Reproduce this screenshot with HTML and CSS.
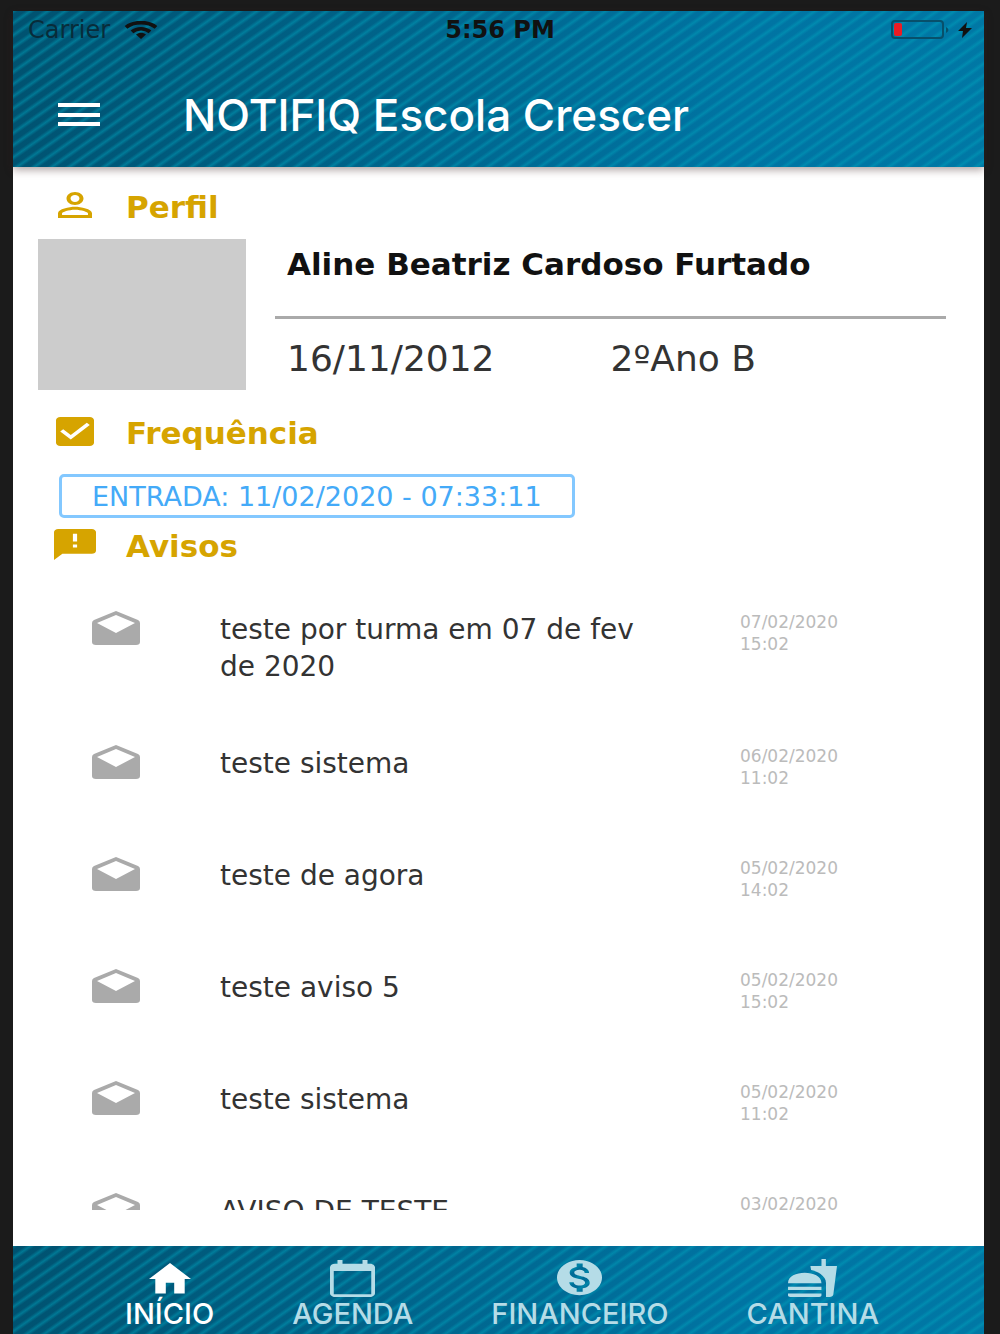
FILE: index.html
```html
<!DOCTYPE html>
<html lang="pt-BR">
<head>
    <meta charset="UTF-8">
    <meta name="viewport" content="width=device-width, initial-scale=1.0">
    <title>NOTIFIQ Escola Crescer</title>
    <link rel="stylesheet" href="styles.css">
</head>
<body>
    <div class="app">
        <!-- Header -->
        <header class="header striped">
            <div class="status-bar">
                <div class="carrier">
                    <span>Carrier</span>
                    <svg class="wifi" viewBox="0 0 34 20" preserveAspectRatio="none" fill="none" stroke="#111" stroke-width="4">
                        <path d="M2 7C10 0 24 0 32 7"/>
                        <path d="M8 12C13 7.500 21 7.500 26 12"/>
                        <path d="M12 15C15 12.500 19 12.500 22 15L17 20Z" fill="#111" stroke="none"/>
                    </svg>
                </div>
                <span class="clock">5:56 PM</span>
                <div class="power">
                    <svg class="battery" viewBox="0 0 60 22" fill="none">
                        <rect x="2" y="2" width="51" height="17" rx="3" stroke="#07506b" stroke-width="2"/>
                        <rect x="4" y="4" width="8" height="13" rx="2" fill="#ed1c24"/>
                        <path d="M56 8v6q5-3 0-6z" fill="#07506b"/>
                    </svg>
                    <svg class="bolt" viewBox="0 0 14 16"><path d="M9 0L0 9h5L4 16L14 6H8z" fill="#111"/></svg>
                </div>
            </div>
            <div class="toolbar">
                <button type="button" class="menu-button" aria-label="Menu">
                    <svg viewBox="0 0 44 24" fill="#fff"><path d="M1 0h42v4H1zM1 10h42v4H1zM1 19h42v4H1z"/></svg>
                </button>
                <h1>NOTIFIQ Escola Crescer</h1>
            </div>
        </header>

        <main class="content">
            <!-- Perfil -->
            <h2 class="section-title">
                <svg class="icon-person" viewBox="4 4 16 16" preserveAspectRatio="none" fill="#d6a400"><path d="M12 5.900c1.160 0 2.100.940 2.100 2.100s-.940 2.100-2.100 2.100S9.900 9.160 9.900 8s.940-2.100 2.100-2.100m0 9c2.970 0 6.100 1.460 6.100 2.100v1.100H5.900V17c0-.640 3.130-2.100 6.100-2.100M12 4C9.790 4 8 5.790 8 8s1.790 4 4 4 4-1.790 4-4-1.790-4-4-4zm0 9c-2.670 0-8 1.340-8 4v3h16v-3c0-2.660-5.330-4-8-4z"/></svg>
                Perfil
            </h2>
            <section class="profile">
                <div class="photo"></div>
                <div class="profile-info">
                    <h3>Aline Beatriz Cardoso Furtado</h3>
                    <div class="profile-row">
                        <span>16/11/2012</span>
                        <span>2ºAno B</span>
                    </div>
                </div>
            </section>

            <!-- Frequência -->
            <h2 class="section-title">
                <svg class="icon-check" viewBox="3 3 18 18" preserveAspectRatio="none" fill="#d6a400"><path d="M19 3H5c-1.110 0-2 .900-2 2v14c0 1.100.890 2 2 2h14c1.110 0 2-.900 2-2V5c0-1.100-.890-2-2-2zm-9 14l-5-5 1.410-1.410L10 14.170l7.590-7.590L19 8l-9 9z"/></svg>
                Frequência
            </h2>
            <button type="button" class="entry">ENTRADA: 11/02/2020 - 07:33:11</button>

            <!-- Avisos -->
            <h2 class="section-title">
                <svg class="icon-notice" viewBox="2 2 20 20" preserveAspectRatio="none" fill="#d6a400"><path d="M20 2H4c-1.100 0-1.990.900-1.990 2L2 22l4-4h14c1.100 0 2-.900 2-2V4c0-1.100-.900-2-2-2zm-7 12h-2v-2h2v2zm0-4h-2V5h2v5z"/></svg>
                Avisos
            </h2>
            <ul class="notices">
                <li>
                    <svg class="icon-mail" viewBox="0 0 48 34"><use href="#mail"/></svg>
                    <p>teste por turma em 07 de fev de 2020</p>
                    <time>07/02/2020 15:02</time>
                </li>
                <li>
                    <svg class="icon-mail" viewBox="0 0 48 34"><use href="#mail"/></svg>
                    <p>teste sistema</p>
                    <time>06/02/2020 11:02</time>
                </li>
                <li>
                    <svg class="icon-mail" viewBox="0 0 48 34"><use href="#mail"/></svg>
                    <p>teste de agora</p>
                    <time>05/02/2020 14:02</time>
                </li>
                <li>
                    <svg class="icon-mail" viewBox="0 0 48 34"><use href="#mail"/></svg>
                    <p>teste aviso 5</p>
                    <time>05/02/2020 15:02</time>
                </li>
                <li>
                    <svg class="icon-mail" viewBox="0 0 48 34"><use href="#mail"/></svg>
                    <p>teste sistema</p>
                    <time>05/02/2020 11:02</time>
                </li>
                <li>
                    <svg class="icon-mail" viewBox="0 0 48 34"><use href="#mail"/></svg>
                    <p>AVISO DE TESTE</p>
                    <time>03/02/2020</time>
                </li>
            </ul>
        </main>

        <!-- Tabs -->
        <nav class="tabs striped">
            <a href="#inicio" class="active">
                <svg class="icon-home" viewBox="2 3 20 19" preserveAspectRatio="none" fill="currentColor"><path d="M10 20v-6h4v6h5v-8h3L12 3 2 12h3v8z"/></svg>
                INÍCIO
            </a>
            <a href="#agenda">
                <svg class="icon-tab" viewBox="3 1 18 20" preserveAspectRatio="none" fill="currentColor"><path d="M19 3h-1V1h-2v2H8V1H6v2H5c-1.100 0-2 .900-2 2v14c0 1.100.900 2 2 2h14c1.100 0 2-.900 2-2V5c0-1.100-.900-2-2-2zm.500 16.500h-15V7h15v12.500z"/></svg>
                AGENDA
            </a>
            <a href="#financeiro">
                <svg class="icon-tab" viewBox="2 2 20 21" preserveAspectRatio="none" fill="currentColor"><path d="M12 2C6.480 2 2 6.480 2 12s4.480 10 10 10 10-4.480 10-10S17.520 2 12 2zm1.410 16.090V20h-2.670v-1.930c-1.710-.360-3.160-1.460-3.270-3.400h1.960c.1 1.050.820 1.870 2.650 1.870 1.960 0 2.400-.980 2.400-1.590 0-.830-.440-1.610-2.670-2.140-2.480-.600-4.180-1.620-4.180-3.670 0-1.720 1.390-2.840 3.110-3.210V4h2.670v1.950c1.860.450 2.790 1.860 2.850 3.390H14.300c-.050-1.110-.640-1.870-2.220-1.870-1.500 0-2.400.680-2.400 1.640 0 .840.650 1.390 2.670 1.910s4.180 1.390 4.180 3.910c-.010 1.830-1.380 2.830-3.120 3.160z"/></svg>
                FINANCEIRO
            </a>
            <a href="#cantina">
                <svg class="icon-food" viewBox="1 1 22 22" preserveAspectRatio="none" fill="currentColor"><path d="M18.060 22.990h1.660c.840 0 1.530-.640 1.630-1.460L23 5.050h-5V1h-1.970v4.050h-4.970l.300 2.340c1.710.470 3.310 1.320 4.270 2.260 1.440 1.420 2.430 2.890 2.430 5.290v8.050zM1 21.990V21h15.030v.990c0 .550-.450 1-1.010 1H2.010c-.560 0-1.010-.450-1.010-1zm15.030-7c0-8-15.030-8-15.030 0h15.030zM1.020 17h15v2h-15z"/></svg>
                CANTINA
            </a>
        </nav>
    </div>

    <svg class="sprite" aria-hidden="true">
        <symbol id="mail" viewBox="0 0 48 34">
            <path fill="#aaa" fill-rule="evenodd" d="M24 0L2 9Q0 10 0 12V31Q0 34 4 34H44Q48 34 48 31V12Q48 10 46 9ZM24 4L43 12L24 22L5 12Z"/>
        </symbol>
    </svg>
</body>
</html>
```
FILE: styles.css
```css
/* General Styles */
* {
    box-sizing: border-box;
}

body {
    font-family: "DejaVu Sans", Verdana, sans-serif;
    background-color: #1b1b1b;
    margin: 0;
    color: #333;
}

h1, h2, h3, p, ul {
    margin: 0;
    padding: 0;
}

svg {
    display: block;
    flex: none;
}

.sprite {
    display: none;
}

.app {
    display: flex;
    flex-direction: column;
    height: 100vh;
    padding: 11px 16px 0 13px;
}

.striped {
    background:
        repeating-linear-gradient(145deg, rgba(0, 165, 190, 0.45) 0, transparent 3px, transparent 7px, rgba(0, 165, 190, 0.45) 10px),
        linear-gradient(100deg, #005270, #0074a3 75%, #0078a5);
}

/* Header */
.header {
    flex: none;
    position: relative;
    height: 156px;
    box-shadow: 0 3px 8px rgba(60, 30, 30, 0.4);
}

.status-bar {
    display: grid;
    grid-template-columns: 1fr auto 1fr;
    align-items: center;
    height: 38px;
    padding: 0 12px 0 15px;
    font-size: 24px;
    color: #082c3a;
}

.carrier, .power {
    display: flex;
    align-items: center;
    gap: 14px;
}

.wifi {
    width: 34px;
    height: 18px;
}

.clock {
    font-weight: 600;
    color: #111;
}

.power {
    justify-content: flex-end;
    gap: 8px;
}

.battery {
    width: 60px;
    height: 22px;
}

.bolt {
    width: 14px;
    height: 16px;
}

.toolbar {
    display: flex;
    align-items: center;
    height: 132px;
    gap: 82px;
    padding: 0 44px;
}

.menu-button {
    padding: 0;
    border: none;
    background: none;
    cursor: pointer;
}

.menu-button svg {
    width: 44px;
    height: 24px;
}

h1 {
    font-family: Inter, Roboto, sans-serif;
    font-size: 44px;
    font-weight: 500;
    color: #fff;
    white-space: nowrap;
}

/* Content */
.content {
    flex: 1;
    min-height: 0;
    display: flex;
    flex-direction: column;
    background-color: #fff;
    padding: 18px 38px 36px 25px;
}

.section-title {
    display: grid;
    grid-template-columns: 76px 1fr;
    align-items: center;
    flex: none;
    height: 44px;
    padding-left: 12px;
    font-size: 31px;
    font-weight: 700;
    color: #d6a400;
}

.section-title svg {
    justify-self: center;
    margin: 0 26px 4px 0;
}

.icon-person {
    width: 34px;
    height: 26px;
}

.icon-check {
    width: 38px;
    height: 29px;
}

.icon-notice {
    width: 42px;
    height: 31px;
}

.profile {
    display: flex;
    gap: 29px;
    flex: none;
    margin: 10px 0 12px;
}

.photo {
    width: 208px;
    height: 151px;
    background-color: #ccc;
}

.profile-info {
    flex: 1;
}

.profile-info h3 {
    height: 80px;
    padding: 0 12px;
    border-bottom: 3px solid #aaa;
    font-size: 31px;
    line-height: 50px;
    color: #111;
    white-space: nowrap;
}

.profile-row {
    display: grid;
    grid-template-columns: 1fr 1fr;
    padding: 0 12px;
    font-size: 36px;
    line-height: 80px;
}

.entry {
    align-self: flex-start;
    flex: none;
    height: 44px;
    margin: 19px 0 6px 21px;
    padding: 0 30px;
    border: 3px solid #83c8ff;
    border-radius: 5px;
    background: none;
    font-family: inherit;
    font-size: 27px;
    color: #44aaf8;
    white-space: nowrap;
    cursor: pointer;
}

/* Notices */
.notices {
    flex: 1;
    min-height: 0;
    overflow: hidden;
    list-style: none;
    padding: 43px 54px 0;
}

.notices li {
    display: grid;
    grid-template-columns: 128px 1fr 152px;
    align-items: start;
    min-height: 112px;
    padding-bottom: 60px;
}

.notices p {
    padding-right: 80px;
    font-size: 28px;
    line-height: 37px;
}

.notices time {
    width: 108px;
    font-size: 17px;
    line-height: 22px;
    color: #bbb;
}

.icon-mail {
    width: 48px;
    height: 34px;
}

/* Tabs */
.tabs {
    display: flex;
    flex: none;
    justify-content: space-between;
    height: 88px;
    padding: 13px 105px 0 112px;
}

.tabs a {
    display: flex;
    flex-direction: column;
    align-items: center;
    justify-content: flex-end;
    height: 70px;
    gap: 2px;
    font-family: Inter, Roboto, sans-serif;
    font-size: 29px;
    line-height: 30px;
    font-weight: 500;
    color: #b5dce7;
    text-decoration: none;
}

.tabs a.active {
    color: #fff;
}

.icon-home {
    width: 42px;
    height: 34px;
}

.icon-tab {
    width: 45px;
    height: 37px;
}

.icon-food {
    width: 49px;
    height: 38px;
}
```
